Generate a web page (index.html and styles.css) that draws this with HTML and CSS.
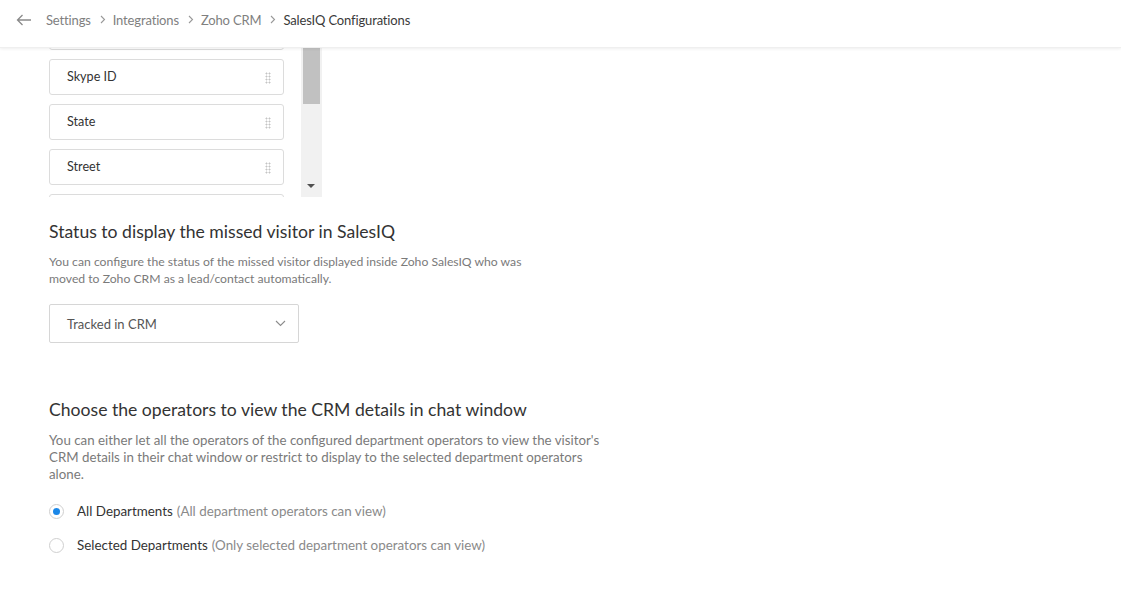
FILE: index.html
```html
<!DOCTYPE html>
<html>
<head>
<meta charset="utf-8">
<link rel="stylesheet" href="styles.css">
</head>
<body>
<header class="topbar">
  <svg class="back" width="16" height="12" viewBox="0 0 16 12"><path d="M15 6H1.5M6.5 1L1.5 6l5 5" fill="none" stroke="#8a8a8a" stroke-width="1.3"/></svg>
  <nav class="crumbs">
    <span class="crumb">Settings</span><svg class="sep" width="6" height="9" viewBox="0 0 6 9"><path d="M1 1l3.5 3.5L1 8" fill="none" stroke="#999" stroke-width="1.1"/></svg>
    <span class="crumb">Integrations</span><svg class="sep" width="6" height="9" viewBox="0 0 6 9"><path d="M1 1l3.5 3.5L1 8" fill="none" stroke="#999" stroke-width="1.1"/></svg>
    <span class="crumb">Zoho CRM</span><svg class="sep" width="6" height="9" viewBox="0 0 6 9"><path d="M1 1l3.5 3.5L1 8" fill="none" stroke="#999" stroke-width="1.1"/></svg>
    <span class="crumb current">SalesIQ Configurations</span>
  </nav>
</header>
<main class="content">
  <div class="fieldlist-wrap">
    <div class="fieldlist">
      <div class="fields">
        <div class="field"><i class="grip"></i></div>
        <div class="field"><span>Skype ID</span><i class="grip"></i></div>
        <div class="field"><span>State</span><i class="grip"></i></div>
        <div class="field"><span>Street</span><i class="grip"></i></div>
        <div class="field"><i class="grip"></i></div>
      </div>
    </div>
    <div class="scrollbar">
      <div class="thumb"></div>
      <div class="arrow"></div>
    </div>
  </div>

  <section class="sec sec-status">
    <h2>Status to display the missed visitor in SalesIQ</h2>
    <p>You can configure the status of the missed visitor displayed inside Zoho SalesIQ who was<br>moved to Zoho CRM as a lead/contact automatically.</p>
    <div class="select">
      <span>Tracked in CRM</span>
      <svg width="11" height="7" viewBox="0 0 11 7"><path d="M1 1l4.5 4.5L10 1" fill="none" stroke="#8c8c8c" stroke-width="1.1"/></svg>
    </div>
  </section>

  <section class="sec sec-ops">
    <h2>Choose the operators to view the CRM details in chat window</h2>
    <p>You can either let all the operators of the configured department operators to view the visitor's<br>CRM details in their chat window or restrict to display to the selected department operators<br>alone.</p>
    <div class="radios">
      <label class="radio"><i class="dot on"></i><span class="lbl">All Departments</span> <span class="hint">(All department operators can view)</span></label>
      <label class="radio"><i class="dot"></i><span class="lbl">Selected Departments</span> <span class="hint">(Only selected department operators can view)</span></label>
    </div>
  </section>
</main>
</body>
</html>
```
FILE: styles.css
```css
* { box-sizing: border-box; }
html, body { margin: 0; padding: 0; background: #fff; }
body {
  font-family: "Lato", "Open Sans", sans-serif;
  color: #333;
  font-size: 13px;
  width: 1121px;
  height: 593px;
  overflow: hidden;
}
.topbar {
  height: 48px;
  display: flex;
  align-items: center;
  padding-left: 16px;
  padding-bottom: 8px;
  background: #fff;
  box-shadow: 0 1px 3px rgba(0,0,0,0.07);
  border-bottom: 1px solid #efefef;
  position: relative;
  z-index: 2;
}
.back { margin-right: 14px; }
.crumbs { display: flex; align-items: center; color: #808080; font-size: 13px; }
.sep { margin: 0 7px 0 9px; }
.crumb { letter-spacing: -0.15px; }
.crumb.current { color: #3a3a3a; }

.content { padding-left: 49px; }

.fieldlist-wrap {
  display: flex;
  height: 149px;
}
.fieldlist {
  width: 252px;
  height: 149px;
  overflow: hidden;
}
.fields {
  margin-top: -34px;
  display: flex;
  flex-direction: column;
  gap: 9px;
  width: 235px;
}
.field {
  height: 36px;
  border: 1px solid #dcdcdc;
  border-radius: 3px;
  display: flex;
  align-items: center;
  justify-content: space-between;
  padding: 0 12px 2px 17px;
  font-size: 12.6px;
  color: #333;
}
.field .grip { margin-left: auto; }
.grip {
  width: 6px;
  height: 12px;
  background-image: radial-gradient(circle, #c4c4c4 0.9px, transparent 1.1px);
  background-size: 3px 3px;
  margin-top: 3px;
}
.scrollbar {
  width: 21px;
  height: 149px;
  background: #f1f1f1;
  position: relative;
  padding: 0 2px;
}
.thumb {
  height: 56px;
  background: #c1c1c1;
}
.arrow {
  position: absolute;
  left: 6px;
  bottom: 9px;
  width: 0; height: 0;
  border-left: 4px solid transparent;
  border-right: 4px solid transparent;
  border-top: 4px solid #505050;
}

.sec h2 {
  font-size: 17.6px;
  font-weight: 400;
  color: #333;
  margin: 0;
  line-height: 22px;
}
.sec p {
  margin: 0;
  color: #7a7a7a;
  font-size: 12.2px;
  line-height: 17px;
}
.sec-status { padding-top: 24px; }
.sec-status p { margin-top: 10px; }
.select {
  margin-top: 17px;
  width: 250px;
  height: 39px;
  border: 1px solid #d6d6d6;
  border-radius: 2px;
  display: flex;
  align-items: center;
  justify-content: space-between;
  padding: 0 12px 0 17px;
  color: #555;
}
.sec-ops { padding-top: 56px; }
.sec-ops p { margin-top: 11px; font-size: 13.3px; }
.radios { margin-top: 20px; display: flex; flex-direction: column; gap: 18px; }
.radio { display: flex; align-items: center; font-size: 13.4px; }
.dot {
  width: 15px; height: 15px;
  border: 1px solid #cfcfcf;
  border-radius: 50%;
  margin-right: 13px;
  position: relative;
  background: #fff;
}
.dot.on::after {
  content: "";
  position: absolute;
  left: 3px; top: 3px;
  width: 7px; height: 7px;
  border-radius: 50%;
  background: #1a87e8;
}
.lbl { color: #333; }
.hint { color: #8a8a8a; margin-left: 4px; }
```
